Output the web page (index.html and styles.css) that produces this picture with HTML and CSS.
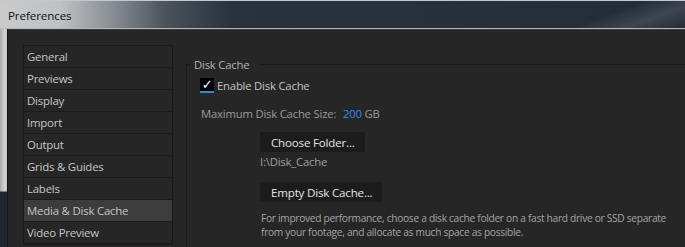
FILE: index.html
```html
<!DOCTYPE html>
<html lang="en">
<head>
  <meta charset="UTF-8">
  <title>Preferences</title>
  <link rel="stylesheet" href="styles.css">
</head>
<body>
  <div class="window">
    <div class="titlebar">
      <span class="title">Preferences</span>
    </div>
    <div class="frame">
      <div class="frame-edge"></div>
      <div class="client">
        <ul class="nav">
          <li>General</li>
          <li>Previews</li>
          <li>Display</li>
          <li>Import</li>
          <li>Output</li>
          <li>Grids &amp; Guides</li>
          <li>Labels</li>
          <li class="active">Media &amp; Disk Cache</li>
          <li>Video Preview</li>
        </ul>
        <div class="panel">
          <fieldset class="group">
            <legend>Disk Cache</legend>
            <label class="check-row">
              <span class="checkbox">&#10003;</span>
              Enable Disk Cache
            </label>
            <div class="size-row">
              Maximum Disk Cache Size:
              <span class="value">200</span> GB
            </div>
            <div class="actions">
              <button class="btn">Choose Folder...</button>
              <div class="path">I:\Disk_Cache</div>
              <button class="btn">Empty Disk Cache...</button>
              <p class="hint">For improved performance, choose a disk cache folder on a fast hard drive or SSD separate<br>from your footage, and allocate as much space as possible.</p>
            </div>
          </fieldset>
        </div>
      </div>
    </div>
  </div>
</body>
</html>
```

FILE: styles.css
```css
body {
  margin: 0;
  width: 685px;
  height: 247px;
  overflow: hidden;
  background: #232d38;
  font-family: "Open Sans", "Noto Sans", sans-serif;
}
.window {
  display: flex;
  flex-direction: column;
  height: 247px;
}
.titlebar {
  flex: none;
  height: 27px;
  border-top: 1px solid #c4c8cc;
  border-bottom: 1px solid #b4b8bc;
  background:
    linear-gradient(160deg, rgba(255,255,255,0) 85%, rgba(255,255,255,0.12) 92%, rgba(255,255,255,0) 100%),
    linear-gradient(90deg, #c9cacb 0px, #bfc1c3 60px, #8a9096 110px, #4a535c 165px, #29333e 230px, #232d38 100%);
  display: flex;
  align-items: center;
  padding-left: 8px;
}
.title {
  font-size: 11.6px;
  color: #111;
  letter-spacing: -0.1px;
  margin-top: 2px;
}
.frame {
  flex: 1;
  min-height: 0;
  display: flex;
}
.frame-edge {
  flex: none;
  width: 7px;
  background:
    linear-gradient(180deg, rgba(0,0,0,0) 162px, #1c2631 163px),
    linear-gradient(90deg, #a9abad, #d6d7d8 5px, #bfc1c3);
}
.client {
  flex: 1;
  display: flex;
  align-items: flex-start;
  background: #262626;
  border-left: 1px solid #161616;
  border-top: 1px solid #3a3a3a;
  padding: 15px 0 0 15px;
  overflow: hidden;
}
.nav {
  flex: none;
  list-style: none;
  margin: 0;
  padding: 0;
  width: 148px;
  border: 1px solid #1a1a1a;
  background: #262626;
}
.nav li {
  height: 21px;
  line-height: 21px;
  padding-left: 3px;
  border-bottom: 1px solid #1c1c1c;
  font-size: 11.4px;
  color: #c6c6c6;
  letter-spacing: -0.2px;
  white-space: nowrap;
}
.nav li.active {
  background: #3c3c3c;
}
.panel {
  flex: none;
  margin-left: 13px;
  margin-top: 12px;
}
.group {
  margin: 0;
  padding: 6px 0 0 13px;
  width: 600px;
  height: 300px;
  border: 1px solid #1a1a1a;
  border-right: none;
  color: #c4c4c4;
  font-size: 11.3px;
}
.group legend {
  padding: 0 11px 0 4px;
  margin-left: -10px;
  color: #b4b4b4;
  letter-spacing: -0.2px;
}
.check-row {
  display: flex;
  align-items: center;
  gap: 3px;
  height: 15px;
  letter-spacing: -0.2px;
}
.checkbox {
  width: 14px;
  height: 13px;
  background: #000;
  border-bottom: 2px solid #2d8cdc;
  color: #fff;
  font-size: 13px;
  line-height: 13px;
  text-align: center;
  font-family: "DejaVu Sans", sans-serif;
}
.size-row {
  margin-top: 13px;
  padding-left: 1px;
  color: #9a9a9a;
  letter-spacing: -0.2px;
}
.value {
  color: #2d8ceb;
  margin-left: 4px;
}
.actions {
  margin-top: 11px;
  padding-left: 60px;
}
.btn {
  display: block;
  height: 20px;
  padding: 0 10px 0 11px;
  border: none;
  background: #1c1c1c;
  color: #e4e4e4;
  font-family: inherit;
  font-size: 11.6px;
  letter-spacing: -0.2px;
}
.path {
  margin: 2px 0 13px;
  color: #a0a0a0;
  letter-spacing: -0.2px;
}
.hint {
  margin: 9px 0 0 1px;
  font-size: 10.2px;
  line-height: 14px;
  color: #a4a4a4;
  letter-spacing: -0.3px;
  white-space: nowrap;
}
```
